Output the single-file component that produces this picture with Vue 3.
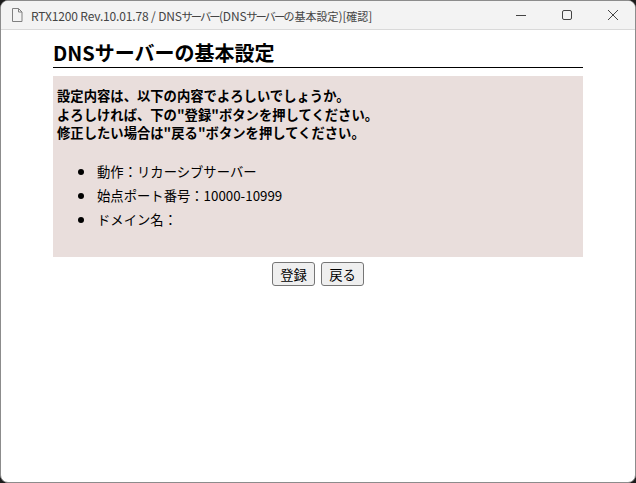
<template>
  <div class="window">
    <div class="titlebar">
      <svg class="page-icon" width="12" height="14" viewBox="0 0 12 14">
        <path d="M1.5 .5H7.5L11 4V13.5H1.5Z M7.5 .5V4H11" fill="none" stroke="#808080" stroke-width="1" />
      </svg>
      <span class="title">RTX1200 Rev.10.01.78 / DNS<span class="kana">サーバー</span>(DNS<span class="kana">サーバー</span><span class="kanji">の基本設定</span>)[<span class="kanji">確認</span>]</span>
      <div class="controls">
        <svg width="46" height="28" viewBox="0 0 46 28">
          <path d="M18 14.5H28" stroke="#444" stroke-width="1" />
        </svg>
        <svg width="46" height="28" viewBox="0 0 46 28">
          <rect x="18.5" y="9.5" width="9" height="9" rx="1.5" fill="none" stroke="#444" stroke-width="1" />
        </svg>
        <svg width="46" height="28" viewBox="0 0 46 28">
          <path d="M18 9L28 19M28 9L18 19" stroke="#444" stroke-width="1" />
        </svg>
      </div>
    </div>
    <div class="content">
      <h1 class="heading">DNSサーバーの基本設定</h1>
      <div class="panel">
        <p class="notice">
          設定内容は、以下の内容でよろしいでしょうか。<br />
          よろしければ、下の"登録"ボタンを押してください。<br />
          修正したい場合は"戻る"ボタンを押してください。
        </p>
        <ul class="items">
          <li v-for="item in items" :key="item">{{ item }}</li>
        </ul>
      </div>
      <div class="buttons">
        <button type="button">登録</button>
        <button type="button">戻る</button>
      </div>
    </div>
  </div>
</template>

<script setup>
const items = ['動作\uFF1Aリカーシブサーバー', '始点ポート番号\uFF1A10000-10999', 'ドメイン名\uFF1A']
</script>

<style scoped>
.window { width: 636px; height: 483px; box-sizing: border-box; background: white; border: 1px solid #8c8c8c; border-radius: 8px; overflow: hidden; font-family: "Noto Sans CJK JP", "Noto Sans", sans-serif; color: #000; }
.titlebar { display: flex; align-items: center; height: 29px; box-sizing: border-box; background: #f3f3f3; border-bottom: 1px solid #d9d9d9; }
.page-icon { margin-left: 10px; margin-right: 8px; }
.title { font-size: 12px; color: #444; white-space: nowrap; flex: 1; letter-spacing: -0.15px; }
.kana { font-size: 11.3px; font-feature-settings: "palt"; letter-spacing: -1.6px; }
.kanji { font-size: 11px; letter-spacing: 0; }
.controls { display: flex; margin-right: -1px; }
.controls svg { display: block; }
.content { padding: 0 52px; }
.heading { font-size: 20px; font-weight: 700; line-height: 28px; margin: 9px 0 8px; border-bottom: 1px solid #000; }
.panel { background: #e9dedc; height: 181px; padding: 11px 4px 0; box-sizing: border-box; }
.notice { margin: 0; font-size: 13.33px; font-weight: 700; line-height: 18.67px; }
.items { margin: 17px 0 0; padding-left: 40px; font-size: 13.33px; list-style: none; }
.items li { line-height: 24px; }
.items li::before { content: ""; display: inline-block; width: 6px; height: 6px; border-radius: 50%; background: #000; margin-left: -19px; margin-right: 13px; vertical-align: 2px; }
.buttons { display: flex; justify-content: center; gap: 6px; margin-top: 5px; }
button { font-family: inherit; font-size: 13.33px; height: 24px; width: 43px; padding: 0; background: #efefef; border: 1px solid #767676; border-radius: 3px; color: #000; }
</style>

<style>
html, body { background: #1c1c1c; }
</style>
